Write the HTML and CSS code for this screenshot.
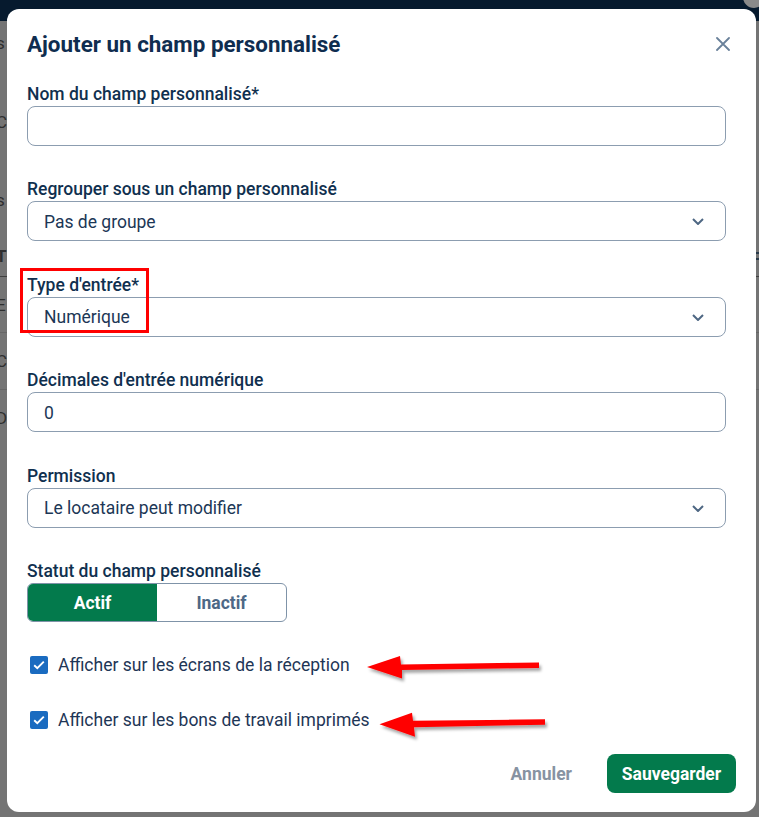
FILE: index.html
```html
<!DOCTYPE html>
<html lang="fr">
<head>
<meta charset="utf-8">
<title>Ajouter un champ personnalisé</title>
<link rel="stylesheet" href="styles.css">
</head>
<body>
<div class="page">
  <div class="topbar"><span class="avatar"></span></div>
  <div class="bg-content">
    <div class="bg-row r-a"><span>s</span></div>
    <div class="bg-row r-b"><span>C</span></div>
    <div class="bg-row r-c"><span>s</span></div>
    <div class="bg-row r-head"><span>T</span><i></i></div>
    <div class="bg-row r-item h56"><span>E</span></div>
    <div class="bg-row r-item h57"><span>C</span></div>
    <div class="bg-row r-item h55 last"><span>D</span></div>
  </div>
</div>

<div class="modal">
  <div class="modal-header">
    <h2 class="modal-title">Ajouter un champ personnalisé</h2>
    <span class="close">
      <svg width="14" height="14" viewBox="0 0 14 14"><path d="M1 1 L13 13 M13 1 L1 13" stroke="#6a819a" stroke-width="1.8" fill="none" stroke-linecap="round"/></svg>
    </span>
  </div>

  <div class="modal-body">
    <div class="field">
      <div class="label">Nom du champ personnalisé*</div>
      <div class="input"></div>
    </div>
    <div class="field">
      <div class="label">Regrouper sous un champ personnalisé</div>
      <div class="input select"><span>Pas de groupe</span>
        <svg width="12" height="7" viewBox="0 0 12 7"><path d="M1 1 L6 6 L11 1" stroke="#4e6783" stroke-width="2" fill="none"/></svg>
      </div>
    </div>
    <div class="field">
      <div class="label">Type d'entrée*</div>
      <div class="input select"><span>Numérique</span>
        <svg width="12" height="7" viewBox="0 0 12 7"><path d="M1 1 L6 6 L11 1" stroke="#4e6783" stroke-width="2" fill="none"/></svg>
      </div>
    </div>
    <div class="field">
      <div class="label">Décimales d'entrée numérique</div>
      <div class="input"><span>0</span></div>
    </div>
    <div class="field">
      <div class="label">Permission</div>
      <div class="input select"><span>Le locataire peut modifier</span>
        <svg width="12" height="7" viewBox="0 0 12 7"><path d="M1 1 L6 6 L11 1" stroke="#4e6783" stroke-width="2" fill="none"/></svg>
      </div>
    </div>
    <div class="field">
      <div class="label">Statut du champ personnalisé</div>
      <div class="toggle">
        <span class="toggle-opt on">Actif</span>
        <span class="toggle-opt">Inactif</span>
      </div>
    </div>

    <div class="check-row">
      <span class="checkbox"><svg width="12" height="10" viewBox="0 0 12 10"><path d="M1.2 5.2 L4.3 8.2 L10.8 1.6" stroke="#fff" stroke-width="1.9" fill="none"/></svg></span>
      <span class="check-text">Afficher sur les écrans de la réception</span>
    </div>
    <div class="check-row last">
      <span class="checkbox"><svg width="12" height="10" viewBox="0 0 12 10"><path d="M1.2 5.2 L4.3 8.2 L10.8 1.6" stroke="#fff" stroke-width="1.9" fill="none"/></svg></span>
      <span class="check-text">Afficher sur les bons de travail imprimés</span>
    </div>
  </div>

  <div class="modal-footer">
    <span class="btn-cancel">Annuler</span>
    <span class="btn-save">Sauvegarder</span>
  </div>
</div>

<div class="highlight-box"></div>
<svg class="annotations" width="759" height="817" viewBox="0 0 759 817">
  <defs>
    <filter id="sh" x="-10%" y="-50%" width="130%" height="200%">
      <feDropShadow dx="2" dy="3" stdDeviation="1.6" flood-color="#000" flood-opacity="0.35"/>
    </filter>
  </defs>
  <path filter="url(#sh)" fill="#ff0000" d="M367 667 L400 656 L401 664.5 L539 662.5 L539 668 L402 670 L402 678.5 Z"/>
  <path filter="url(#sh)" fill="#ff0000" d="M379.5 724.3 L412 712.7 L413 720.7 L545 719.3 L545 724.7 L414 727.3 L415 736.7 Z"/>
</svg>
</body>
</html>
```

FILE: styles.css
```css
* { box-sizing: border-box; }
html, body {
  margin: 0;
  padding: 0;
}
body {
  width: 759px;
  height: 817px;
  overflow: hidden;
  background: #747474;
  font-family: Roboto, "Liberation Sans", Arial, sans-serif;
  position: relative;
}

/* background page under overlay */
.page {
  width: 100%;
  height: 100%;
}
.topbar {
  height: 21px;
  background: #061a2e;
  position: relative;
}
.avatar {
  position: absolute;
  right: -6px;
  top: -14px;
  width: 22px;
  height: 22px;
  border-radius: 50%;
  background: #8a8a8a;
}
.bg-content {
  display: flex;
  flex-direction: column;
}
.bg-row {
  font-size: 17px;
  line-height: 20px;
  color: #2e2e2e;
  display: flex;
  align-items: center;
  margin-left: -4px;
}
.r-a { height: 44px; }
.r-b { height: 114px; }
.r-c { height: 42px; }
.r-head {
  height: 56px;
  font-weight: 700;
  border-bottom: 1px solid #3f3f3f;
  justify-content: space-between;
  align-items: flex-end;
  padding-bottom: 10px;
}
.r-head i {
  width: 8px;
  height: 8px;
  border: 2px solid #2a3a4a;
  margin-right: -2px;
  margin-bottom: 6px;
}
.r-item { border-bottom: 1px solid #666; }
.h56 { height: 56px; }
.h57 { height: 57px; }
.h55 { height: 55px; }
.r-item.last { border-bottom: none; }

/* modal */
.modal {
  position: absolute;
  left: 7px;
  top: 9px;
  width: 749px;
  height: 803px;
  background: #fff;
  border-radius: 12px;
  padding: 21px 20px 19px 20px;
  display: flex;
  flex-direction: column;
  color: #0f2e50;
}
.modal-header {
  display: flex;
  align-items: center;
  justify-content: space-between;
  height: 28px;
  flex-shrink: 0;
  margin-right: 6px;
}
.modal-title {
  margin: 0;
  font-size: 22.4px;
  line-height: 28px;
  font-weight: 700;
  color: #0f2d4f;
}
.close {
  display: flex;
  width: 14px;
  height: 14px;
}
.modal-body {
  margin-top: 24.5px;
  padding-right: 10px;
  display: flex;
  flex-direction: column;
}
.field {
  display: flex;
  flex-direction: column;
  margin-bottom: 32.5px;
}
.label {
  font-size: 17.5px;
  line-height: 22px;
  font-weight: 500;
  color: #10304f;
  margin-bottom: 1px;
}
.input {
  height: 40px;
  border: 1px solid #8c9db0;
  border-radius: 8px;
  display: flex;
  align-items: center;
  justify-content: space-between;
  padding: 1px 21px 0 16px;
  font-size: 17.5px;
  color: #1c3756;
}
.toggle {
  display: flex;
  width: 260px;
  height: 39px;
  border: 1px solid #7f93a8;
  border-radius: 6px;
  overflow: hidden;
}
.toggle-opt {
  flex: 1;
  display: flex;
  align-items: center;
  justify-content: center;
  font-size: 17.5px;
  font-weight: 700;
  color: #4d6886;
}
.toggle-opt.on {
  background: #037a4c;
  color: #fff;
}
.check-row {
  display: flex;
  align-items: center;
  height: 24px;
  margin-top: -2px;
  margin-bottom: 33px;
  padding-left: 3px;
}
.check-row.last { margin-bottom: 0; }
.checkbox {
  width: 18px;
  height: 18px;
  border-radius: 2px;
  background: #1a6bc0;
  display: flex;
  align-items: center;
  justify-content: center;
  margin-right: 10px;
}
.check-text {
  font-size: 17.5px;
  color: #1e3656;
}
.modal-footer {
  margin-top: auto;
  display: flex;
  justify-content: flex-end;
  align-items: center;
  flex-shrink: 0;
}
.btn-cancel {
  font-size: 17.5px;
  font-weight: 700;
  color: #8793a2;
  padding: 0 16px;
  margin-right: 19px;
}
.btn-save {
  width: 129px;
  height: 39px;
  border-radius: 8px;
  background: #037a4c;
  color: #fff;
  font-size: 17.5px;
  font-weight: 700;
  display: flex;
  align-items: center;
  justify-content: center;
}

/* annotations */
.highlight-box {
  position: absolute;
  left: 20px;
  top: 268px;
  width: 129px;
  height: 65px;
  border: 3px solid #ff0000;
}
.annotations {
  position: absolute;
  left: 0;
  top: 0;
  pointer-events: none;
}
```
